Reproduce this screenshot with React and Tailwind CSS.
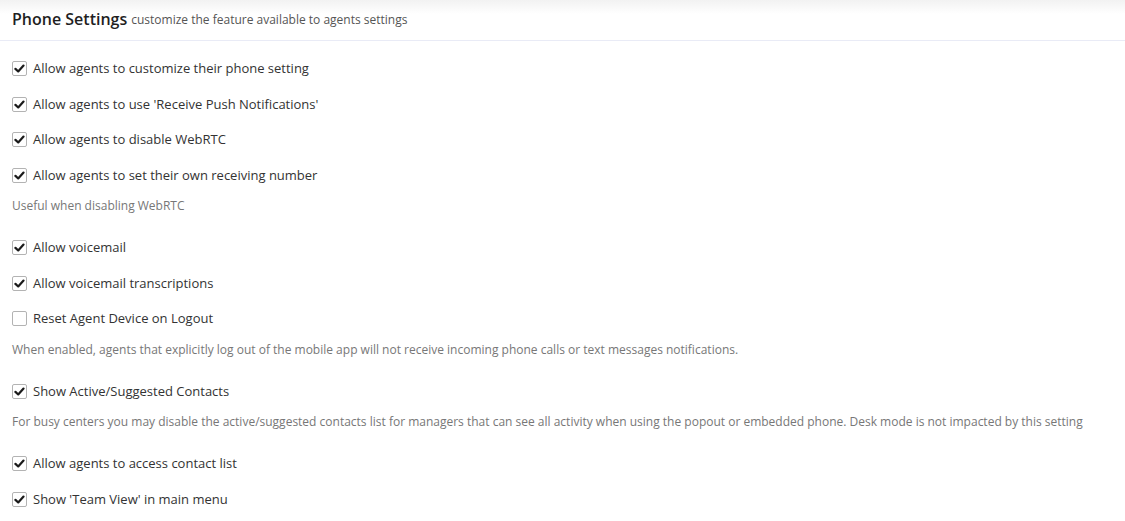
import React from 'react';

const items = [
  { label: 'Allow agents to customize their phone setting', checked: true },
  { label: "Allow agents to use 'Receive Push Notifications'", checked: true },
  { label: 'Allow agents to disable WebRTC', checked: true },
  { label: 'Allow agents to set their own receiving number', checked: true, help: 'Useful when disabling WebRTC' },
  { label: 'Allow voicemail', checked: true },
  { label: 'Allow voicemail transcriptions', checked: true },
  {
    label: 'Reset Agent Device on Logout',
    checked: false,
    help: 'When enabled, agents that explicitly log out of the mobile app will not receive incoming phone calls or text messages notifications.',
  },
  {
    label: 'Show Active/Suggested Contacts',
    checked: true,
    help: 'For busy centers you may disable the active/suggested contacts list for managers that can see all activity when using the popout or embedded phone. Desk mode is not impacted by this setting',
  },
  { label: 'Allow agents to access contact list', checked: true },
  { label: "Show 'Team View' in main menu", checked: true },
];

const Checkbox = ({ checked }) => (
  <span className="flex items-center justify-center w-[15px] h-[15px] border border-[#b3b3b3] rounded-[2px] bg-white shrink-0">
    {checked && (
      <svg width="11" height="11" viewBox="0 0 12 12">
        <path d="M1.6 6.4 L4.6 9.2 L10.4 2.8" fill="none" stroke="#1a1a1a" strokeWidth="2.4" strokeLinecap="round" strokeLinejoin="round" />
      </svg>
    )}
  </span>
);

const App = () => {
  return (
    <div className="w-[1125px] h-[521px] bg-white overflow-hidden font-['Open_Sans',sans-serif]">
      <div className="h-[41px] border-b border-[#e9ebf6] bg-[linear-gradient(to_bottom,#f2f2f2_0px,#ffffff_14px)] flex items-center px-3 pb-[3px]">
        <h1 className="text-[16px] font-semibold text-[#1f1f1f]">Phone Settings</h1>
        <span className="ml-1 text-[12px] text-[#555] mt-[3px]">customize the feature available to agents settings</span>
      </div>

      <div className="pt-[10px] px-3">
        {items.map((item) => (
          <div key={item.label}>
            <label className="flex items-center gap-[6px] h-[35.5px]">
              <Checkbox checked={item.checked} />
              <span className="text-[13px] text-[#333]">{item.label}</span>
            </label>
            {item.help && (
              <div className="h-[37px] pt-[4px] text-[12px] leading-[17px] text-[#777]">{item.help}</div>
            )}
          </div>
        ))}
      </div>
    </div>
  );
};

export default App;
